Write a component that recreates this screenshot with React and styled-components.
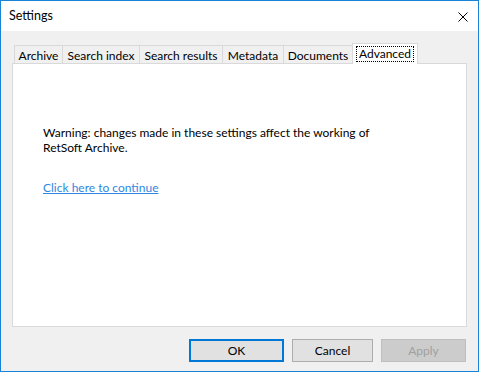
import React from "react";
import styled, { createGlobalStyle } from "styled-components";

const GlobalStyle = createGlobalStyle`
  html, body {
    margin: 0;
    padding: 0;
    background: #ffffff;
  }
  * {
    box-sizing: border-box;
  }
`;

const Window = styled.div`
  width: 479px;
  height: 372px;
  border: 1px solid #1883d7;
  background: #f0f0f0;
  display: flex;
  flex-direction: column;
  font-family: Lato, "Noto Sans", "Liberation Sans", sans-serif;
  font-size: 12px;
  color: #000000;
`;

const TitleBar = styled.div`
  height: 30px;
  background: #ffffff;
  display: flex;
  align-items: center;
  justify-content: space-between;
  padding: 0 10px 0 8px;
`;

const Title = styled.span`
  font-size: 12.5px;
  line-height: 16px;
`;

const CloseIcon = styled.svg`
  display: block;
  width: 10px;
  height: 10px;
  margin-top: 1px;
`;

const Body = styled.div`
  flex: 1;
  display: flex;
  flex-direction: column;
  padding: 12px 11px 9px 11px;
`;

const TabStrip = styled.div`
  display: flex;
  align-items: flex-end;
  height: 21px;
  margin-bottom: -1px;
  padding-left: 2px;
  position: relative;
  z-index: 1;
`;

const Tab = styled.div`
  width: ${(p) => p.$w}px;
  height: ${(p) => (p.$active ? 21 : 19)}px;
  margin-left: ${(p) => (p.$first ? 0 : -1)}px;
  border: 1px solid #d9d9d9;
  border-bottom: ${(p) => (p.$active ? "none" : "1px solid #d9d9d9")};
  background: ${(p) => (p.$active ? "#ffffff" : "#f0f0f0")};
  display: flex;
  justify-content: center;
  align-items: ${(p) => (p.$active ? "flex-start" : "center")};
  padding-top: ${(p) => (p.$active ? 3 : 1)}px;
  line-height: 15px;
  white-space: nowrap;
`;

const FocusLabel = styled.span`
  outline: 1px dotted #000000;
  padding: 0 2px;
  line-height: 14px;
`;

const Panel = styled.div`
  flex: 1;
  background: #ffffff;
  border: 1px solid #d9d9d9;
  padding: 61px 30px 0 30px;
`;

const Warning = styled.p`
  margin: 0;
  line-height: 15px;
`;

const Link = styled.a`
  display: inline-block;
  margin-top: 25px;
  color: #2f87e0;
  text-decoration: underline;
  line-height: 15px;
  cursor: pointer;
`;

const Footer = styled.div`
  display: flex;
  justify-content: flex-end;
  gap: 8px;
  margin-top: 12px;
  padding-right: 1px;
`;

const Button = styled.button`
  width: ${(p) => p.$w}px;
  height: 23px;
  font-family: inherit;
  font-size: 12px;
  padding: 0;
  background: ${(p) => (p.$disabled ? "#cccccc" : "#e1e1e1")};
  color: ${(p) => (p.$disabled ? "#a0a0a0" : "#000000")};
  border: ${(p) =>
    p.$primary ? "2px solid #0078d7" : p.$disabled ? "1px solid #bfbfbf" : "1px solid #adadad"};
`;

const tabs = [
  { label: "Archive", w: 49 },
  { label: "Search index", w: 78 },
  { label: "Search results", w: 84 },
  { label: "Metadata", w: 62 },
  { label: "Documents", w: 70 },
];

export default function App() {
  return (
    <>
      <GlobalStyle />
      <Window>
        <TitleBar>
          <Title>Settings</Title>
          <CloseIcon viewBox="0 0 10 10">
            <path d="M0.5 0.5 L9.5 9.5 M9.5 0.5 L0.5 9.5" stroke="#000" strokeWidth="1" />
          </CloseIcon>
        </TitleBar>
        <Body>
          <TabStrip>
            {tabs.map((t, i) => (
              <Tab key={t.label} $w={t.w} $first={i === 0}>
                {t.label}
              </Tab>
            ))}
            <Tab $w={66} $active>
              <FocusLabel>Advanced</FocusLabel>
            </Tab>
          </TabStrip>
          <Panel>
            <Warning>
              Warning: changes made in these settings affect the working of
              <br />
              RetSoft Archive.
            </Warning>
            <Link>Click here to continue</Link>
          </Panel>
          <Footer>
            <Button $w={95} $primary>OK</Button>
            <Button $w={81}>Cancel</Button>
            <Button $w={85} $disabled>Apply</Button>
          </Footer>
        </Body>
      </Window>
    </>
  );
}
